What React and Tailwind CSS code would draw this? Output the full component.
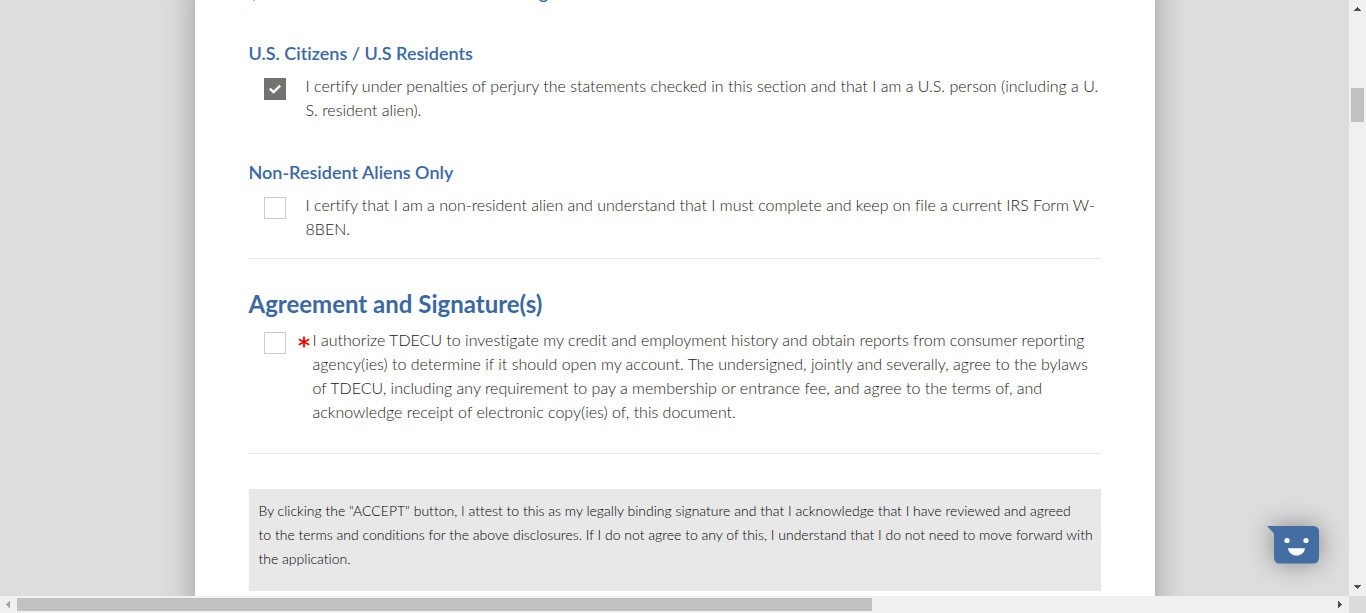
import React from "react";

function Check({ id, checked, children }) {
  return (
    <div className="flex items-start pl-[15px]">
      <span className="relative mt-1 h-[22px] w-[22px] shrink-0">
        <input
          id={id}
          type="checkbox"
          defaultChecked={checked}
          className="peer block h-[22px] w-[22px] appearance-none border border-[#ccccc8] bg-white checked:border-[#73726e] checked:bg-[#73726e]"
        />
        <svg
          viewBox="0 0 22 22"
          className="pointer-events-none absolute inset-0 hidden h-[22px] w-[22px] peer-checked:block"
          fill="none"
          stroke="#fff"
          strokeWidth="2.4"
        >
          <path d="M5.8 10.6 L9.6 14.2 L16.2 7.7" />
        </svg>
      </span>
      {children}
    </div>
  );
}

function Asterisk({ className }) {
  return (
    <svg viewBox="0 0 12 12" className={className} stroke="#f00" strokeWidth="1.8" aria-hidden="true">
      <path d="M6 0.500V11.500M0.8 3.2L11.2 8.8M11.2 3.2L0.8 8.8" />
    </svg>
  );
}

const bodyText = "text-base leading-6 font-light text-[#222]";
const subheading = "text-lg leading-6 font-semibold text-[#3c68a2]";

function Arrow({ label, d, fill, className }) {
  return (
    <button type="button" aria-label={label} className={className}>
      <svg viewBox="0 0 17 17" className="h-[17px] w-[17px]" fill={fill} shapeRendering="crispEdges">
        <path d={d} />
      </svg>
    </button>
  );
}

export default function App() {
  return (
    <div className="flex h-screen flex-col overflow-hidden bg-[#ddd] font-['Lato',sans-serif] [font-variant-ligatures:none]">
      <div className="flex min-h-0 flex-1">
        <main className="min-w-0 flex-1 overflow-hidden">
          <div className="mx-auto min-h-full max-w-[960px] bg-white px-[54px] pb-12 shadow-[0_0_30px_rgba(0,0,0,0.3)]">
            <h2 className={"-mt-5 flex gap-4 " + subheading}>
              <Asterisk className="mt-[10px] h-3 w-[10px]" />
              Tax Identification and Withholding
            </h2>

            <h3 className={"mt-[37px] " + subheading}>U.S. Citizens / U.S Residents</h3>
            <div className="mt-[9px]">
              <Check id="citizen" checked>
                <label htmlFor="citizen" className={"ml-5 " + bodyText}>
                  I certify under penalties of perjury the statements checked in this section and that I am a U.S. person (including a U.<br />S. resident alien).
                </label>
              </Check>
            </div>

            <h3 className={"mt-[38px] " + subheading}>Non-Resident Aliens Only</h3>
            <div className="mt-[9px]">
              <Check id="alien">
                <label htmlFor="alien" className={"ml-5 " + bodyText}>
                  I certify that I am a non-resident alien and understand that I must complete and keep on file a current IRS Form W-<br />8BEN.
                </label>
              </Check>
            </div>

            <hr className="mt-[17px] border-[#e8e8e8]" />

            <h2 className="mt-[27px] text-2xl leading-9 font-bold text-[#3c68a2]">Agreement and Signature(s)</h2>
            <div className="mt-[6px]">
              <Check id="authorize">
                <Asterisk className="mt-2 ml-3 h-3 w-3 shrink-0" />
                <label htmlFor="authorize" className={"ml-[3px] " + bodyText}>
                  I authorize TDECU to investigate my credit and employment history and obtain reports from consumer reporting agency(ies) to determine if it should open my account. The undersigned, jointly and severally, agree to the bylaws of TDECU, including any requirement to pay a membership or entrance fee, and agree to the terms of, and acknowledge receipt of electronic copy(ies) of, this document.
                </label>
              </Check>
            </div>

            <hr className="mt-[29px] border-[#e8e8e8]" />

            <p className="mt-[35px] bg-[#e8e8e8] pt-[10px] pr-1 pb-5 pl-[10px] text-sm leading-6 font-light text-black">
              By clicking the "ACCEPT" button, I attest to this as my legally binding signature and that I acknowledge that I have reviewed and agreed<br /> to the terms and conditions for the above disclosures. If I do not agree to any of this, I understand that I do not need to move forward with the application.
            </p>
          </div>
        </main>

        <div className="flex w-[17px] shrink-0 flex-col bg-[#f0f0f0]">
          <Arrow label="Scroll up" fill="#505050" className="h-[17px]" d="M5 11H12V10H11V9H10V8H9V7H8V8H7V9H6V10H5Z" />
          <div className="mx-[2px] mt-[71px] h-[34px] bg-[#c1c1c1]" />
          <Arrow label="Scroll down" fill="#505050" className="mt-auto h-[17px]" d="M5 6H12V7H11V8H10V9H9V10H8V9H7V8H6V7H5Z" />
        </div>
      </div>

      <div className="flex h-[17px] shrink-0 bg-[#f0f0f0]">
        <Arrow label="Scroll left" fill="#a3a3a3" className="w-[17px]" d="M10 5V12H9V11H8V10H7V9H6V8H7V7H8V6H9V5Z" />
        <div className="flex min-w-0 flex-1 py-[2px]">
          <div className="w-[65%] bg-[#c1c1c1]" />
        </div>
        <Arrow label="Scroll right" fill="#505050" className="w-[17px]" d="M6 5V12H7V11H8V10H9V9H10V8H9V7H8V6H7V5Z" />
        <div className="w-[17px] bg-[#dcdcdc]" />
      </div>

      <button type="button" aria-label="Open chat" className="fixed right-[46px] bottom-[48px] h-10 w-[54px]">
        <svg viewBox="0 0 54 40" className="h-10 w-[54px] overflow-visible drop-shadow-[0_0_12px_rgba(0,0,0,0.4)]">
          <path
            d="M1 1H47.500a5.500 5.500 0 0 1 5.500 5.500V33a5.500 5.500 0 0 1-5.500 5.500H13.500a5.500 5.500 0 0 1-5.500-5.500V8.500Z"
            fill="#436ea4"
          />
          <circle cx="21" cy="15.500" r="2.600" fill="#fff" />
          <circle cx="40" cy="15.500" r="2.600" fill="#fff" />
          <path d="M22 23.200H39C38.500 27.500 35 30.500 30.500 30.500S22.500 27.500 22 23.200Z" fill="#fff" />
        </svg>
      </button>
    </div>
  );
}
